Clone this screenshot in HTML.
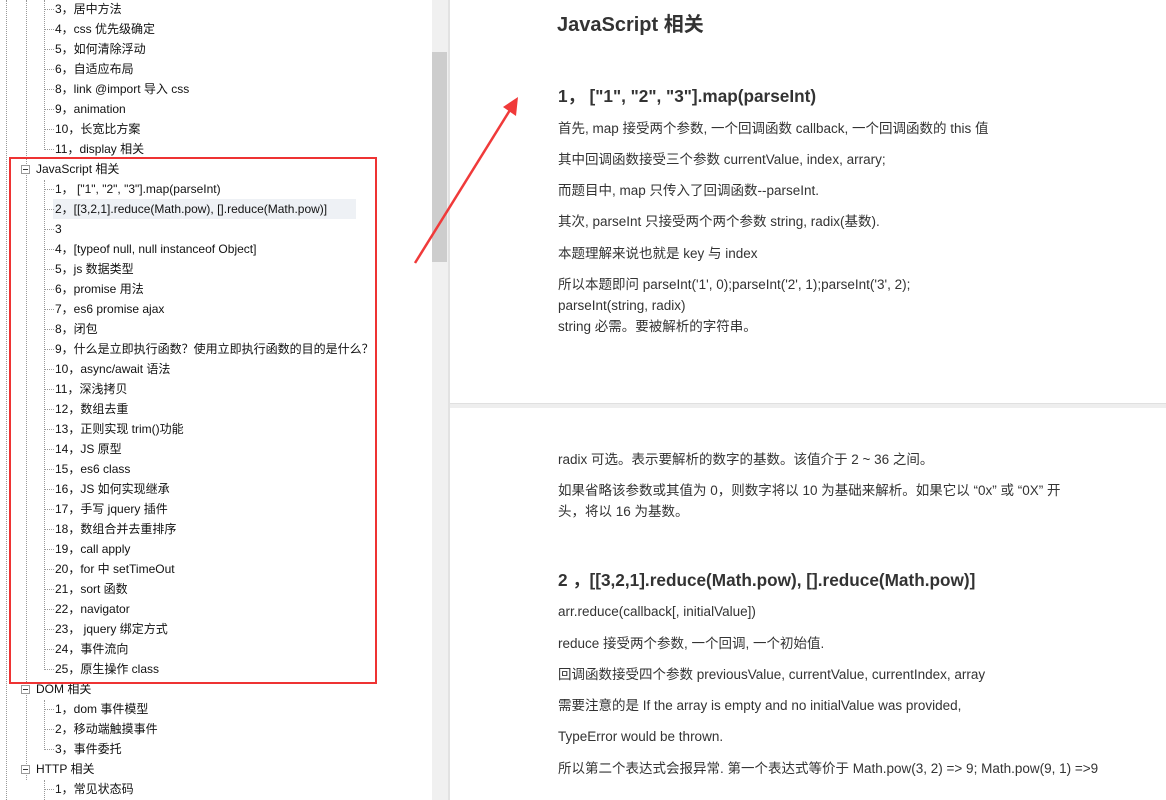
<!DOCTYPE html>
<html><head><meta charset="utf-8"><style>
*{margin:0;padding:0;box-sizing:border-box}
body{width:1166px;height:800px;overflow:hidden;position:relative;background:#fff;font-family:"Liberation Sans","Noto Sans CJK SC",sans-serif;color:#222}
.r{position:absolute;font-size:12px;line-height:20px;white-space:nowrap;color:#111}
.vl{position:absolute;border-left:1px dotted #999;width:0}
.hl{position:absolute;border-top:1px dotted #999;height:0;width:9px}
.box{position:absolute;width:9px;height:9px;border:1px solid #999;background:#fff}
.box:after{content:"";position:absolute;left:1px;top:3px;width:5px;border-top:1px solid #333}
.t{position:absolute;left:558px;font-size:13.5px;color:#333;white-space:nowrap;line-height:21px}
.h2{position:absolute;left:558px;font-size:17.2px;font-weight:bold;color:#333;white-space:nowrap}
</style></head><body>
<div class="vl" style="left:6px;top:0;height:800px"></div>
<div class="vl" style="left:26px;top:0;height:780px"></div>
<div class="vl" style="left:44px;top:0;height:150px"></div>
<div class="vl" style="left:44px;top:180px;height:490px"></div>
<div class="vl" style="left:44px;top:700px;height:50px"></div>
<div class="vl" style="left:44px;top:780px;height:20px"></div>
<div style="position:absolute;left:53px;top:199px;width:303px;height:20px;background:#eef1f5"></div>
<div class="r" style="left:55px;top:-1px">3，居中方法</div>
<div class="r" style="left:55px;top:19px">4，css 优先级确定</div>
<div class="r" style="left:55px;top:39px">5，如何清除浮动</div>
<div class="r" style="left:55px;top:59px">6，自适应布局</div>
<div class="r" style="left:55px;top:79px">8，link @import 导入 css</div>
<div class="r" style="left:55px;top:99px">9，animation</div>
<div class="r" style="left:55px;top:119px">10，长宽比方案</div>
<div class="r" style="left:55px;top:139px">11，display 相关</div>
<div class="box" style="left:21px;top:165px"></div><div class="r" style="left:36px;top:159px">JavaScript 相关</div>
<div class="r" style="left:55px;top:179px">1，&nbsp;["1", "2", "3"].map(parseInt)</div>
<div class="r" style="left:55px;top:199px">2，[[3,2,1].reduce(Math.pow), [].reduce(Math.pow)]</div>
<div class="r" style="left:55px;top:219px">3</div>
<div class="r" style="left:55px;top:239px">4，[typeof null, null instanceof Object]</div>
<div class="r" style="left:55px;top:259px">5，js 数据类型</div>
<div class="r" style="left:55px;top:279px">6，promise 用法</div>
<div class="r" style="left:55px;top:299px">7，es6 promise ajax</div>
<div class="r" style="left:55px;top:319px">8，闭包</div>
<div class="r" style="left:55px;top:339px">9，什么是立即执行函数？使用立即执行函数的目的是什么？</div>
<div class="r" style="left:55px;top:359px">10，async/await 语法</div>
<div class="r" style="left:55px;top:379px">11，深浅拷贝</div>
<div class="r" style="left:55px;top:399px">12，数组去重</div>
<div class="r" style="left:55px;top:419px">13，正则实现 trim()功能</div>
<div class="r" style="left:55px;top:439px">14，JS 原型</div>
<div class="r" style="left:55px;top:459px">15，es6 class</div>
<div class="r" style="left:55px;top:479px">16，JS 如何实现继承</div>
<div class="r" style="left:55px;top:499px">17，手写 jquery 插件</div>
<div class="r" style="left:55px;top:519px">18，数组合并去重排序</div>
<div class="r" style="left:55px;top:539px">19，call apply</div>
<div class="r" style="left:55px;top:559px">20，for 中 setTimeOut</div>
<div class="r" style="left:55px;top:579px">21，sort 函数</div>
<div class="r" style="left:55px;top:599px">22，navigator</div>
<div class="r" style="left:55px;top:619px">23，&nbsp;jquery 绑定方式</div>
<div class="r" style="left:55px;top:639px">24，事件流向</div>
<div class="r" style="left:55px;top:659px">25，原生操作 class</div>
<div class="box" style="left:21px;top:685px"></div><div class="r" style="left:36px;top:679px">DOM 相关</div>
<div class="r" style="left:55px;top:699px">1，dom 事件模型</div>
<div class="r" style="left:55px;top:719px">2，移动端触摸事件</div>
<div class="r" style="left:55px;top:739px">3，事件委托</div>
<div class="box" style="left:21px;top:765px"></div><div class="r" style="left:36px;top:759px">HTTP 相关</div>
<div class="r" style="left:55px;top:779px">1，常见状态码</div>
<div class="hl" style="left:45px;top:9px"></div><div class="hl" style="left:45px;top:29px"></div><div class="hl" style="left:45px;top:49px"></div><div class="hl" style="left:45px;top:69px"></div><div class="hl" style="left:45px;top:89px"></div><div class="hl" style="left:45px;top:109px"></div><div class="hl" style="left:45px;top:129px"></div><div class="hl" style="left:45px;top:149px"></div>
<div class="hl" style="left:45px;top:189px"></div><div class="hl" style="left:45px;top:209px"></div><div class="hl" style="left:45px;top:229px"></div><div class="hl" style="left:45px;top:249px"></div><div class="hl" style="left:45px;top:269px"></div><div class="hl" style="left:45px;top:289px"></div><div class="hl" style="left:45px;top:309px"></div><div class="hl" style="left:45px;top:329px"></div><div class="hl" style="left:45px;top:349px"></div><div class="hl" style="left:45px;top:369px"></div><div class="hl" style="left:45px;top:389px"></div><div class="hl" style="left:45px;top:409px"></div><div class="hl" style="left:45px;top:429px"></div><div class="hl" style="left:45px;top:449px"></div><div class="hl" style="left:45px;top:469px"></div><div class="hl" style="left:45px;top:489px"></div><div class="hl" style="left:45px;top:509px"></div><div class="hl" style="left:45px;top:529px"></div><div class="hl" style="left:45px;top:549px"></div><div class="hl" style="left:45px;top:569px"></div><div class="hl" style="left:45px;top:589px"></div><div class="hl" style="left:45px;top:609px"></div><div class="hl" style="left:45px;top:629px"></div><div class="hl" style="left:45px;top:649px"></div><div class="hl" style="left:45px;top:669px"></div>
<div class="hl" style="left:45px;top:709px"></div><div class="hl" style="left:45px;top:729px"></div><div class="hl" style="left:45px;top:749px"></div><div class="hl" style="left:45px;top:789px"></div>
<div style="position:absolute;left:9px;top:157px;width:368px;height:527px;border:2px solid #e33"></div>
<div style="position:absolute;left:432px;top:0;width:18px;height:800px;background:#f0f0f0"></div>
<div style="position:absolute;left:432px;top:52px;width:15px;height:210px;background:#cdcdcd"></div>
<div style="position:absolute;left:448px;top:0;width:2px;height:800px;background:#e2e2e2"></div>
<div style="position:absolute;left:450px;top:403px;width:716px;height:5px;background:#eeeeee;border-top:1px solid #e0e0e0"></div>
<svg style="position:absolute;left:0;top:0" width="1166" height="800"><line x1="415" y1="263" x2="510" y2="110" stroke="#f03a3a" stroke-width="2.5"/><polygon points="518,97 503,107 516,116" fill="#f03a3a"/></svg>
<div style="position:absolute;left:557px;top:8px;font-size:20px;font-weight:bold;color:#333">JavaScript 相关</div>
<div class="h2" style="top:82px">1，&nbsp;["1", "2", "3"].map(parseInt)</div>
<div class="t" style="top:118px">首先, map 接受两个参数, 一个回调函数 callback, 一个回调函数的 this 值</div>
<div class="t" style="top:149px">其中回调函数接受三个参数 currentValue, index, arrary;</div>
<div class="t" style="top:180px">而题目中, map 只传入了回调函数--parseInt.</div>
<div class="t" style="top:211px">其次, parseInt 只接受两个两个参数 string, radix(基数).</div>
<div class="t" style="top:243px">本题理解来说也就是 key 与 index</div>
<div class="t" style="top:274px">所以本题即问 parseInt('1', 0);parseInt('2', 1);parseInt('3', 2);<br>parseInt(string, radix)<br>string 必需。要被解析的字符串。</div>
<div class="t" style="top:449px">radix 可选。表示要解析的数字的基数。该值介于 2 ~ 36 之间。</div>
<div class="t" style="top:480px">如果省略该参数或其值为 0，则数字将以 10 为基础来解析。如果它以 “0x” 或 “0X” 开<br>头，将以 16 为基数。</div>
<div class="h2" style="top:566px">2 ，[[3,2,1].reduce(Math.pow), [].reduce(Math.pow)]</div>
<div class="t" style="top:601px">arr.reduce(callback[, initialValue])</div>
<div class="t" style="top:633px">reduce 接受两个参数, 一个回调, 一个初始值.</div>
<div class="t" style="top:664px">回调函数接受四个参数 previousValue, currentValue, currentIndex, array</div>
<div class="t" style="top:695px">需要注意的是 If the array is empty and no initialValue was provided,</div>
<div class="t" style="top:726px">TypeError would be thrown.</div>
<div class="t" style="top:758px">所以第二个表达式会报异常. 第一个表达式等价于 Math.pow(3, 2) =&gt; 9; Math.pow(9, 1) =&gt;9</div>
</body></html>
